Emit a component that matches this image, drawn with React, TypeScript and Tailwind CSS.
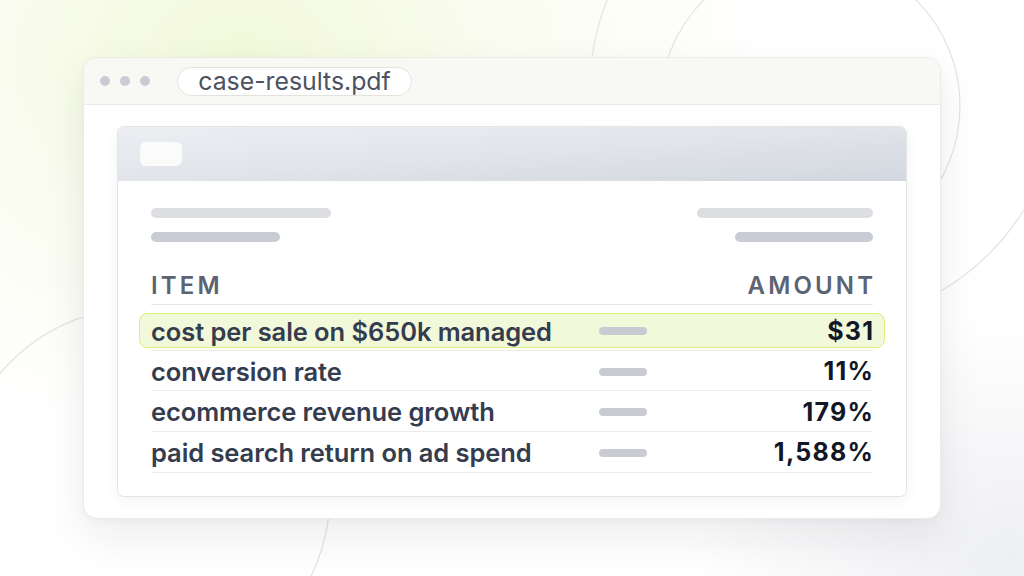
import React from 'react';

const rows = [
    { label: 'cost per sale on $650k managed', value: '$31', highlight: true },
    { label: 'conversion rate', value: '11%' },
    { label: 'ecommerce revenue growth', value: '179%' },
    { label: 'paid search return on ad spend', value: '1,588%' },
];

// faint outline circles behind the window
const Backdrop = () => (
    <svg className="absolute inset-0 h-full w-full" viewBox="0 0 1024 576" fill="none">
        <circle cx="824" cy="88" r="234" stroke="#e3e4df" strokeWidth="1.2" />
        <circle cx="810" cy="106" r="150" stroke="#e3e4df" strokeWidth="1.2" />
        <circle cx="143" cy="494" r="187" stroke="#e3e4df" strokeWidth="1.2" />
    </svg>
);

const App: React.FC = () => {
    return (
        <div
            className="relative flex h-[576px] w-[1024px] items-center justify-center overflow-hidden bg-white bg-[radial-gradient(ellipse_520px_380px_at_240px_60px,#f2f9d9_0%,rgba(245,250,228,0.7)_40%,rgba(255,255,255,0)_100%),radial-gradient(ellipse_320px_240px_at_1010px_560px,#eeeff2_0%,rgba(255,255,255,0)_100%)]"
            style={{ fontFamily: 'Inter, "Noto Sans", sans-serif' }}
        >
            <Backdrop />

            {/* Window */}
            <div className="relative flex h-[462px] w-[858px] flex-col overflow-hidden rounded-[14px] border border-[#ebebe7] bg-white shadow-[0_18px_44px_rgba(20,25,40,0.08),0_2px_6px_rgba(20,25,40,0.03)]">
                {/* Title bar */}
                <div className="flex h-[47px] shrink-0 items-center border-b border-[#e9e9e5] bg-[#f8f8f5] pl-[16px]">
                    <div className="flex items-center gap-[10px]">
                        <span className="h-[10px] w-[10px] rounded-full bg-[#cbccd3]" />
                        <span className="h-[10px] w-[10px] rounded-full bg-[#cbccd3]" />
                        <span className="h-[10px] w-[10px] rounded-full bg-[#cbccd3]" />
                    </div>
                    <div className="ml-[27px] flex h-[29px] w-[235px] items-center justify-center rounded-full border border-[#e3e3de] bg-white text-[24.8px] leading-none text-[#4c5262]">
                        case-results.pdf
                    </div>
                </div>

                {/* Body */}
                <div className="flex flex-1 px-[33px] pt-[21px] pb-[21px]">
                    <div className="flex flex-1 flex-col overflow-hidden rounded-[7px] border border-[#e4e5e8] bg-white shadow-[0_4px_14px_rgba(20,25,40,0.05)]">
                        {/* Doc header band */}
                        <div className="flex h-[54px] shrink-0 items-center bg-linear-to-br from-[#eceef2] via-[#e1e5ea] to-[#d2d6de] pl-[22px]">
                            <div className="h-[24px] w-[42px] rounded-[6px] bg-[#fbfbfc]" />
                        </div>

                        <div className="flex flex-col px-[33px] pt-[27px]">
                            {/* Placeholder lines */}
                            <div className="flex justify-between">
                                <div className="flex flex-col gap-[14px]">
                                    <div className="h-[10px] w-[180px] rounded-full bg-[#dddee2]" />
                                    <div className="h-[10px] w-[129px] rounded-full bg-[#c9ccd4]" />
                                </div>
                                <div className="flex flex-col items-end gap-[14px]">
                                    <div className="h-[10px] w-[176px] rounded-full bg-[#dddee2]" />
                                    <div className="h-[10px] w-[138px] rounded-full bg-[#c9ccd4]" />
                                </div>
                            </div>

                            {/* Table head */}
                            <div className="mt-[30px] flex h-[33px] items-start justify-between border-b border-[#e6e7ea] text-[24px] leading-[28px] font-semibold tracking-[0.13em] text-[#5c6372]">
                                <span>ITEM</span>
                                <span className="mr-[-0.13em]">AMOUNT</span>
                            </div>

                            {/* Rows */}
                            <div className="mt-[5px] flex flex-col">
                                {rows.map(row => (
                                    <div key={row.label} className="flex h-[40.7px] items-center border-b border-[#ebebeb]">
                                        <div
                                            className={
                                                row.highlight
                                                    ? 'mx-[-12px] mt-[2px] flex h-[35px] flex-1 items-center rounded-[8px] border-[1.5px] border-[#d7ef80] bg-[#f2f9da] px-[11px] pt-[1px]'
                                                    : 'flex flex-1 items-center pt-[2px]'
                                            }
                                        >
                                            <span className="flex-1 text-[25.5px] leading-none font-semibold tracking-[-0.003em] text-[#353c4e]">{row.label}</span>
                                            <span className="h-[8px] w-[48px] rounded-full bg-[#c9cbd3]" />
                                            <span className="mr-[-0.05em] w-[227px] text-right text-[25px] leading-none font-bold tracking-[0.05em] text-[#111726]">{row.value}</span>
                                        </div>
                                    </div>
                                ))}
                            </div>
                        </div>
                    </div>
                </div>
            </div>
        </div>
    );
};

export default App;
